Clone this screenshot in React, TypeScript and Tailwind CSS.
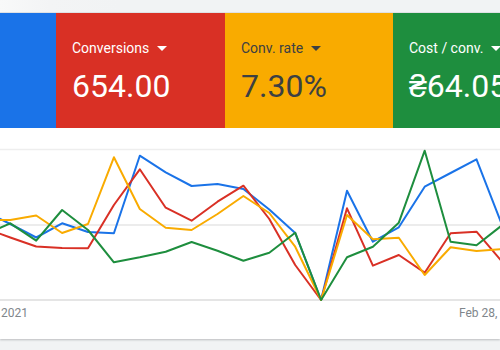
import React from "react";

type Tile = { label: string; value: string; bg: string; text: string; width: string };

const tiles: Tile[] = [
  { label: "Conversions", value: "654.00", bg: "bg-[#d93025]", text: "text-white", width: "w-[169px]" },
  { label: "Conv. rate", value: "7.30%", bg: "bg-[#f9ab00]", text: "text-[#3c4043]", width: "w-[168px]" },
  { label: "Cost / conv.", value: "₴64.05", bg: "bg-[#1e8e3e]", text: "text-white", width: "w-[168px]" },
];

const xs = Array.from({ length: 21 }, (_, i) => 10.3 + 25.9 * (i - 1));

const series: { color: string; ys: number[] }[] = [
  {
    color: "#1a73e8",
    ys: [211, 224, 237.5, 223.3, 232, 233.3, 155.7, 172.3, 186, 184, 189, 209.5, 233, 300, 190.7, 241.7, 227.3, 186.7, 173, 159.3, 226],
  },
  {
    color: "#d93025",
    ys: [228, 237.5, 246.5, 248, 248.3, 205, 169.3, 207.7, 220.7, 201.7, 185.7, 219, 265, 300, 208.3, 265.7, 255, 272.7, 233.3, 231.7, 262],
  },
  {
    color: "#f9ab00",
    ys: [220, 220, 215.5, 233, 224, 157.3, 209, 227.7, 230, 214, 196, 213, 246.7, 300, 215, 239.3, 237.7, 275, 247.3, 251, 249],
  },
  {
    color: "#1e8e3e",
    ys: [235, 223.3, 240.7, 210, 230, 262.3, 257.3, 251.7, 242, 250.7, 260.7, 252.7, 232.7, 300, 257.3, 246.7, 222.7, 150.7, 241.7, 245.3, 225],
  },
];

function Caret({ dark }: { dark: boolean }) {
  return (
    <svg width="10" height="5" viewBox="0 0 10 5" className="ml-[8px] shrink-0">
      <polygon points="0,0 10,0 5,5" fill={dark ? "#3c4043" : "#ffffff"} />
    </svg>
  );
}

export default function App() {
  return (
    <div
      className="w-[500px] h-[350px] overflow-hidden bg-[#f1f3f4]"
      style={{ fontFamily: "Roboto, 'Liberation Sans', sans-serif" }}
    >
      <div className="h-[13px] bg-[linear-gradient(90deg,#f8f9f9_0px,#f3f4f5_50px,#f1f3f4_120px)] border-b border-[#e3e5e8]" />

      <div className="bg-white shadow-[0_1px_2px_rgba(60,64,67,0.3)]">
        <div className="flex h-[115px]">
          {/* first scorecard, mostly scrolled out of view */}
          <div className="w-[56px] shrink-0 bg-[#1a73e8]" />
          {tiles.map((t) => (
            <div key={t.label} className={`${t.width} shrink-0 ${t.bg} ${t.text} pl-[16px] pt-[25px]`}>
              <div className="flex items-center h-[20px] text-[14px] leading-[20px] whitespace-nowrap">
                <span>{t.label}</span>
                <Caret dark={t.text !== "text-white"} />
              </div>
              <div className="mt-[12px] text-[32px] leading-[32px] whitespace-nowrap">{t.value}</div>
            </div>
          ))}
        </div>

        <svg width="500" height="177" viewBox="0 128 500 177" className="block">
          <line x1="0" x2="500" y1="149.5" y2="149.5" stroke="#eeeeee" strokeWidth="1.5" />
          <line x1="0" x2="500" y1="225" y2="225" stroke="#e6e6e6" strokeWidth="1.5" />
          <line x1="0" x2="500" y1="300" y2="300" stroke="#dcdcdc" strokeWidth="1.5" />
          {series.map((s) => (
            <polyline
              key={s.color}
              points={s.ys.map((y, i) => `${xs[i].toFixed(1)},${y}`).join(" ")}
              fill="none"
              stroke={s.color}
              strokeWidth="2"
              strokeLinejoin="round"
            />
          ))}
        </svg>

        <div className="flex h-[34px] text-[12px] leading-[16px] text-[#80868b] whitespace-nowrap">
          <span className="pl-px">2021</span>
          <span className="ml-[431px] shrink-0">Feb 28, 2021</span>
        </div>
      </div>
    </div>
  );
}
